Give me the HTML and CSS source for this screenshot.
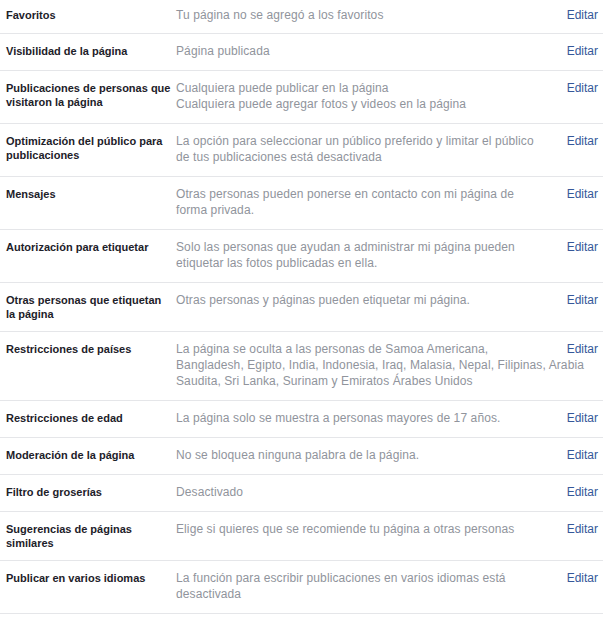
FILE: index.html
```html
<!DOCTYPE html>
<html lang="es">
<head>
<meta charset="utf-8">
<title>Configuración general</title>
<link rel="stylesheet" href="styles.css">
</head>
<body>
<ul class="settings">
  <li class="row">
    <div class="label">Favoritos</div>
    <div class="value">Tu página no se agregó a los favoritos</div>
    <a class="edit" href="#">Editar</a>
  </li>
  <li class="row">
    <div class="label">Visibilidad de la página</div>
    <div class="value">Página publicada</div>
    <a class="edit" href="#">Editar</a>
  </li>
  <li class="row">
    <div class="label">Publicaciones de personas que visitaron la página</div>
    <div class="value">Cualquiera puede publicar en la página<br>Cualquiera puede agregar fotos y videos en la página</div>
    <a class="edit" href="#">Editar</a>
  </li>
  <li class="row">
    <div class="label">Optimización del público para publicaciones</div>
    <div class="value">La opción para seleccionar un público preferido y limitar el público<br>de tus publicaciones está desactivada</div>
    <a class="edit" href="#">Editar</a>
  </li>
  <li class="row">
    <div class="label">Mensajes</div>
    <div class="value">Otras personas pueden ponerse en contacto con mi página de<br>forma privada.</div>
    <a class="edit" href="#">Editar</a>
  </li>
  <li class="row">
    <div class="label">Autorización para etiquetar</div>
    <div class="value">Solo las personas que ayudan a administrar mi página pueden<br>etiquetar las fotos publicadas en ella.</div>
    <a class="edit" href="#">Editar</a>
  </li>
  <li class="row">
    <div class="label">Otras personas que etiquetan la página</div>
    <div class="value">Otras personas y páginas pueden etiquetar mi página.</div>
    <a class="edit" href="#">Editar</a>
  </li>
  <li class="row">
    <div class="label">Restricciones de países</div>
    <div class="value">La página se oculta a las personas de Samoa Americana,<br>Bangladesh, Egipto, India, Indonesia, Iraq, Malasia, Nepal, Filipinas, Arabia<br>Saudita, Sri Lanka, Surinam y Emiratos Árabes Unidos</div>
    <a class="edit" href="#">Editar</a>
  </li>
  <li class="row">
    <div class="label">Restricciones de edad</div>
    <div class="value">La página solo se muestra a personas mayores de 17 años.</div>
    <a class="edit" href="#">Editar</a>
  </li>
  <li class="row">
    <div class="label">Moderación de la página</div>
    <div class="value">No se bloquea ninguna palabra de la página.</div>
    <a class="edit" href="#">Editar</a>
  </li>
  <li class="row">
    <div class="label">Filtro de groserías</div>
    <div class="value">Desactivado</div>
    <a class="edit" href="#">Editar</a>
  </li>
  <li class="row">
    <div class="label">Sugerencias de páginas similares</div>
    <div class="value">Elige si quieres que se recomiende tu página a otras personas</div>
    <a class="edit" href="#">Editar</a>
  </li>
  <li class="row">
    <div class="label">Publicar en varios idiomas</div>
    <div class="value">La función para escribir publicaciones en varios idiomas está<br>desactivada</div>
    <a class="edit" href="#">Editar</a>
  </li>
</ul>
</body>
</html>
```
FILE: styles.css
```css
html, body {
  margin: 0;
  padding: 0;
  background: #fff;
}

body {
  font-family: "Liberation Sans", Arial, Helvetica, sans-serif;
  font-size: 12px;
  color: #1d2129;
}

.settings {
  list-style: none;
  margin: 0;
  padding: 0;
}

.row {
  display: flex;
  align-items: flex-start;
  padding: 10px 5px 10px 6px;
  border-bottom: 1px solid #e5e6e9;
}

.row:first-child {
  padding-top: 8px;
  padding-bottom: 9px;
}

.label {
  flex: 0 0 166px;
  margin-right: 4px;
  font-size: 11px;
  font-weight: bold;
  line-height: 14px;
  color: #1d2129;
}

.value {
  flex: 1 1 auto;
  min-width: 0;
  margin: -1px 0 1px;
  line-height: 16px;
  letter-spacing: 0.1px;
  color: #90949c;
  white-space: nowrap;
}

.edit {
  flex: 0 0 auto;
  margin: -1px 0 1px 8px;
  line-height: 16px;
  color: #365899;
  text-decoration: none;
}
```
